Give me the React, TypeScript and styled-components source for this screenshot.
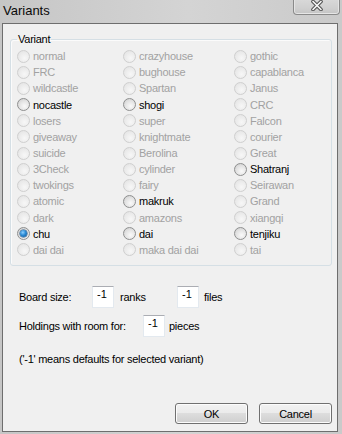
import React from "react";
import styled, { createGlobalStyle } from "styled-components";

// -------------------- Global --------------------
const GlobalStyle = createGlobalStyle`
  html, body {
    margin: 0;
    padding: 0;
    background: #cbcbcb;
  }
`;

// -------------------- Window frame --------------------
const Frame = styled.div`
  width: 342px;
  height: 434px;
  display: flex;
  flex-direction: column;
  background: linear-gradient(to right, #c6c6c6 0%, #d4d4d4 55%, #cacaca 100%);
  font-family: "Liberation Sans", Arial, sans-serif;
  overflow: hidden;
`;

const TitleBar = styled.div`
  height: 23px;
  display: flex;
  justify-content: space-between;
  align-items: flex-start;
  flex-shrink: 0;
`;

const Title = styled.span`
  font-size: 13px;
  line-height: 15px;
  color: #0a0a0a;
  padding: 3px 0 0 3px;
`;

const CloseButton = styled.button`
  width: 47px;
  height: 15px;
  margin-right: 2px;
  padding: 0;
  display: flex;
  justify-content: center;
  align-items: flex-start;
  border: 1px solid #8a8a8a;
  border-top: none;
  border-radius: 0 0 4px 4px;
  background: linear-gradient(#d8d8d8, #cfcfcf 60%, #c4c4c4);
  box-shadow: inset 0 -1px 0 #e6e6e6, inset 1px 0 0 #e4e4e4, inset -1px 0 0 #e4e4e4;
`;

const Client = styled.div`
  margin-left: 2px;
  width: 336px;
  height: 409px;
  box-sizing: border-box;
  border: 1px solid #6e6e6e;
  background: #f0f0f0;
  display: flex;
  flex-direction: column;
  padding: 0 5px 7px 0;
`;

// -------------------- Group box --------------------
const GroupBox = styled.fieldset`
  margin: 8px 0 0 7px;
  width: 322px;
  box-sizing: border-box;
  padding: 2px 4px 7px 6px;
  border: 1px solid #d5dfe5;
  border-radius: 3px;
  box-shadow: inset 1px 1px 0 #fbfbfb;
  min-inline-size: 0;
`;

const GroupLabel = styled.legend`
  padding: 0 1px;
  margin: 0;
  font-size: 11px;
  line-height: 14px;
  letter-spacing: -0.25px;
  color: #000;
`;

const VariantGrid = styled.div`
  display: grid;
  grid-template-columns: 106px 111px 1fr;
  grid-template-rows: repeat(13, 16.17px);
  grid-auto-flow: column;
`;

const Option = styled.label`
  display: flex;
  align-items: center;
  gap: 3px;
  font-size: 11px;
  letter-spacing: -0.25px;
  color: ${(p: { $state: RadioState }) => (p.$state === "disabled" ? "#a2a2a2" : "#000")};
`;

type RadioState = "disabled" | "enabled" | "checked";

const Circle = styled.span<{ $state: RadioState }>`
  width: 13px;
  height: 13px;
  box-sizing: border-box;
  border-radius: 50%;
  flex-shrink: 0;
  display: flex;
  align-items: center;
  justify-content: center;
  border: 1px solid ${(p) => (p.$state === "disabled" ? "#cfcfcf" : "#8e8f8f")};
  background: ${(p) =>
    p.$state === "disabled"
      ? "radial-gradient(circle at 60% 65%, #f7f7f7 0%, #ebebeb 55%, #e0e0e0 100%)"
      : "radial-gradient(circle at 60% 65%, #fafafa 0%, #e2e2e2 55%, #c9c9c9 100%)"};
`;

const CheckDot = styled.span`
  width: 7px;
  height: 7px;
  border-radius: 50%;
  background: radial-gradient(circle at 40% 35%, #8fd0ff 0%, #2a8ad4 45%, #0f4f8f 100%);
  box-shadow: 0 0 0 0.5px #1e4f7c;
`;

// -------------------- Form rows --------------------
const Fields = styled.div`
  display: flex;
  flex-direction: column;
  gap: 7px;
  margin: 20px 0 0 16px;
`;

const FieldRow = styled.div`
  display: flex;
  align-items: center;
  height: 22px;
  font-size: 11px;
  letter-spacing: -0.25px;
  color: #000;
`;

const FieldLabel = styled.span<{ $width: number }>`
  width: ${(p) => p.$width}px;
  flex-shrink: 0;
`;

const NumberBox = styled.input`
  width: 22px;
  height: 22px;
  box-sizing: border-box;
  margin: 0;
  padding: 0 0 6px 4px;
  border: 1px solid #e3e9ef;
  border-top-color: #abadb3;
  background: #fff;
  font-family: "Liberation Sans", Arial, sans-serif;
  font-size: 11px;
  color: #000;
  outline: none;
`;

const Unit = styled.span<{ $gap: number; $width?: number }>`
  margin-left: ${(p) => p.$gap}px;
  width: ${(p) => (p.$width ? `${p.$width}px` : "auto")};
  flex-shrink: 0;
`;

const Note = styled.div`
  margin: 16px 0 0 16px;
  font-size: 11px;
  letter-spacing: -0.25px;
  line-height: 13px;
  color: #000;
`;

// -------------------- Buttons --------------------
const ButtonRow = styled.div`
  margin-top: auto;
  display: flex;
  justify-content: flex-end;
  gap: 11px;
`;

const DialogButton = styled.button`
  width: 73px;
  height: 21px;
  padding: 0;
  border: 1px solid #707070;
  border-radius: 3px;
  background: linear-gradient(#f2f2f2 0%, #ebebeb 45%, #dddddd 50%, #cfcfcf 100%);
  box-shadow: inset 0 0 0 1px #fcfcfc;
  font-family: "Liberation Sans", Arial, sans-serif;
  font-size: 11px;
  letter-spacing: -0.25px;
  color: #000;
`;

// -------------------- Data --------------------
const D: RadioState = "disabled";
const E: RadioState = "enabled";

const variants: [string, RadioState][] = [
  ["normal", D], ["FRC", D], ["wildcastle", D], ["nocastle", E], ["losers", D],
  ["giveaway", D], ["suicide", D], ["3Check", D], ["twokings", D], ["atomic", D],
  ["dark", D], ["chu", "checked"], ["dai dai", D],
  ["crazyhouse", D], ["bughouse", D], ["Spartan", D], ["shogi", E], ["super", D],
  ["knightmate", D], ["Berolina", D], ["cylinder", D], ["fairy", D], ["makruk", E],
  ["amazons", D], ["dai", E], ["maka dai dai", D],
  ["gothic", D], ["capablanca", D], ["Janus", D], ["CRC", D], ["Falcon", D],
  ["courier", D], ["Great", D], ["Shatranj", E], ["Seirawan", D], ["Grand", D],
  ["xiangqi", D], ["tenjiku", E], ["tai", D],
];

const CloseGlyph = (): JSX.Element => (
  <svg width="12" height="11" viewBox="0 0 12 11">
    <path d="M2 1.5 L10 9.5 M10 1.5 L2 9.5" stroke="#4c4c4c" strokeWidth="3.6" strokeLinecap="round" />
    <path d="M2 1.5 L10 9.5 M10 1.5 L2 9.5" stroke="#f6f6f6" strokeWidth="1.7" strokeLinecap="round" />
  </svg>
);

// JSX function starts from here
const App = (): JSX.Element => {
  return (
    <>
      <GlobalStyle />
      <Frame>
        <TitleBar>
          <Title>Variants</Title>
          <CloseButton aria-label="Close">
            <CloseGlyph />
          </CloseButton>
        </TitleBar>
        <Client>
          <GroupBox>
            <GroupLabel>Variant</GroupLabel>
            <VariantGrid>
              {variants.map(([name, state]) => (
                <Option key={name} $state={state}>
                  <Circle $state={state}>{state === "checked" && <CheckDot />}</Circle>
                  {name}
                </Option>
              ))}
            </VariantGrid>
          </GroupBox>

          <Fields>
            <FieldRow>
              <FieldLabel $width={73}>Board size:</FieldLabel>
              <NumberBox defaultValue="-1" />
              <Unit $gap={6} $width={57}>ranks</Unit>
              <NumberBox defaultValue="-1" />
              <Unit $gap={5}>files</Unit>
            </FieldRow>
            <FieldRow>
              <FieldLabel $width={124}>Holdings with room for:</FieldLabel>
              <NumberBox defaultValue="-1" />
              <Unit $gap={4}>pieces</Unit>
            </FieldRow>
          </Fields>

          <Note>('-1' means defaults for selected variant)</Note>

          <ButtonRow>
            <DialogButton>OK</DialogButton>
            <DialogButton>Cancel</DialogButton>
          </ButtonRow>
        </Client>
      </Frame>
    </>
  );
};

export default App;
